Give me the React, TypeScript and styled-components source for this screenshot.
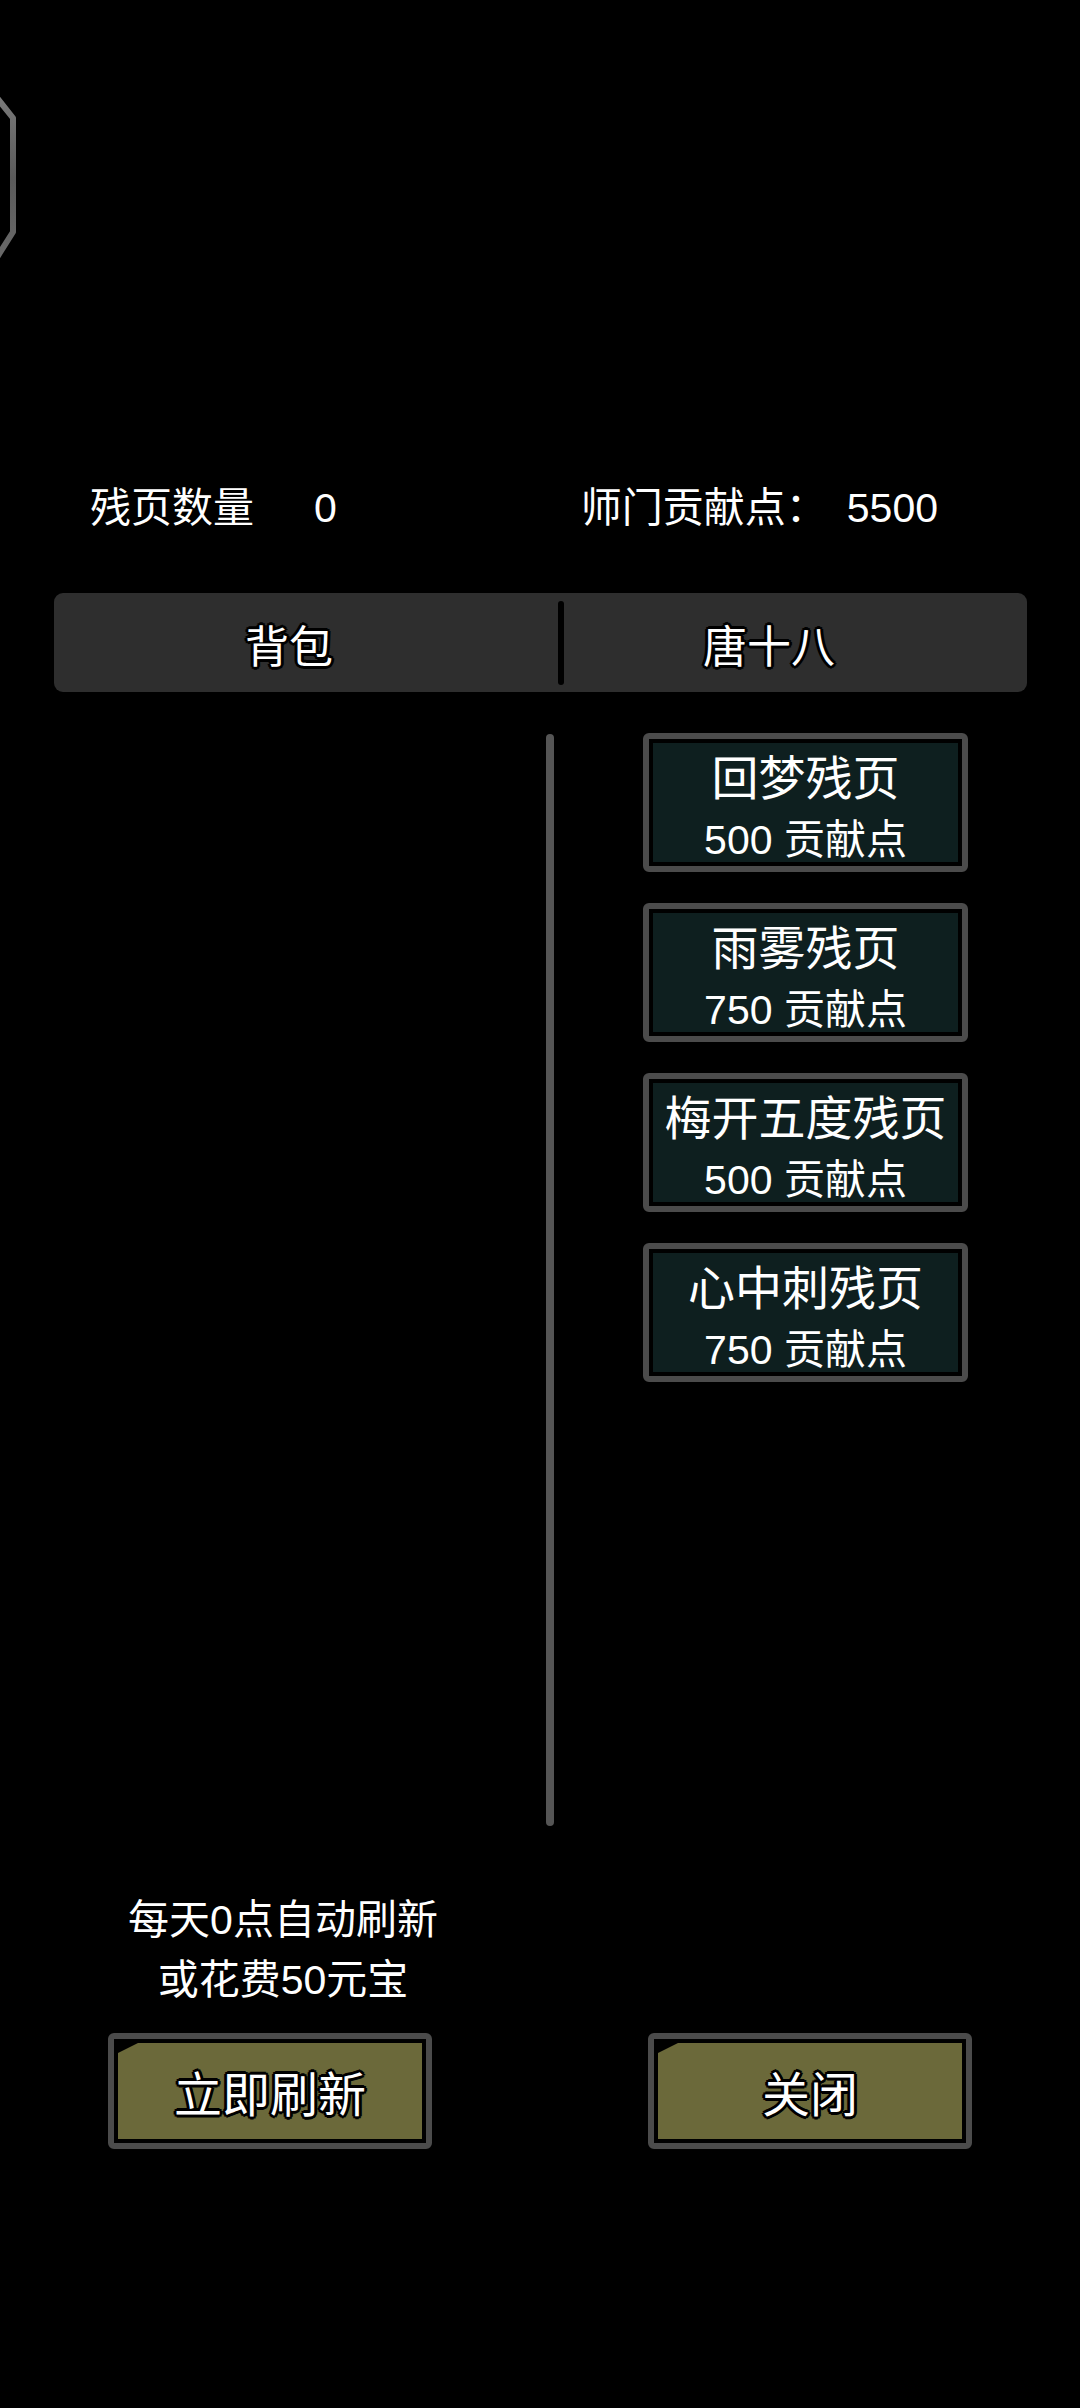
import styled, { createGlobalStyle } from "styled-components";

const GlobalStyle = createGlobalStyle`
  html, body {
    margin: 0;
    padding: 0;
    background: #000;
  }
  body {
    font-family: "Liberation Sans", "Noto Sans CJK SC", sans-serif;
    color: #fff;
  }
`;

const outline = `
  text-shadow:
    0 0 3px #000,
    2px 2px 0 #000, -2px -2px 0 #000, 2px -2px 0 #000, -2px 2px 0 #000,
    0 3px 0 #000, 3px 0 0 #000, 0 -3px 0 #000, -3px 0 0 #000;
`;

const Page = styled.div`
  width: 1080px;
  height: 2408px;
  background: #000;
  overflow: hidden;
  display: flex;
  flex-direction: column;
`;

const TopBar = styled.div`
  height: 470px;
  padding-top: 92px;
  box-sizing: border-box;
`;

const HeaderRow = styled.div`
  height: 76px;
  display: flex;
  align-items: center;
  font-size: 41px;
  line-height: 76px;
`;

const Stat = styled.div<{ $left: number; $gap: number }>`
  display: flex;
  margin-left: ${({ $left }) => $left}px;
  gap: ${({ $gap }) => $gap}px;
`;

const TabBar = styled.div`
  margin: 47px 53px 0 54px;
  height: 99px;
  background: #2e2e2e;
  border-radius: 9px;
  display: grid;
  grid-template-columns: 504px 6px 1fr;
  align-items: center;
`;

const Tab = styled.div<{ $shift: number }>`
  text-align: center;
  padding: 10px ${({ $shift }) => $shift}px 0 0;
  font-size: 44px;
  line-height: 89px;
  ${outline}
`;

const TabDivider = styled.div`
  width: 6px;
  height: 84px;
  background: #000;
  border-radius: 3px;
`;

const Body = styled.div`
  display: grid;
  grid-template-columns: 492px 8px 1fr;
  padding: 41px 0 0 54px;
`;

const VerticalRule = styled.div`
  width: 8px;
  height: 1092px;
  margin-top: 1px;
  background: #555;
  border-radius: 4px;
`;

const ShopList = styled.div`
  padding-left: 89px;
  display: flex;
  flex-direction: column;
  gap: 31px;
`;

const Card = styled.div`
  width: 325px;
  height: 139px;
  box-sizing: border-box;
  border: 6px solid #4b4b4b;
  border-radius: 6px;
  background: #000;
  padding: 4px;
  display: flex;
`;

const CardFill = styled.div`
  flex: 1;
  background: #0e1f1f;
  display: flex;
  flex-direction: column;
  align-items: center;
  padding-top: 6px;
`;

const CardTitle = styled.div`
  font-size: 47px;
  line-height: 60px;
  white-space: nowrap;
`;

const CardPrice = styled.div`
  font-size: 41px;
  line-height: 62px;
  white-space: nowrap;
`;

const Footer = styled.div`
  display: grid;
  grid-template-columns: 540px 540px;
  margin-top: 64px;
`;

const FooterColumn = styled.div`
  display: flex;
  flex-direction: column;
  justify-content: flex-end;
  padding-left: 108px;
`;

const RefreshNote = styled.div`
  width: 350px;
  text-align: center;
  font-size: 41px;
  line-height: 60px;
  margin-bottom: 23px;
`;

const GameButton = styled.div`
  width: 324px;
  height: 116px;
  box-sizing: border-box;
  border: 6px solid #4b4b4b;
  border-radius: 6px;
  background: #000;
  padding: 4px;
  display: flex;
`;

const ButtonFill = styled.div`
  flex: 1;
  background: #6b693a;
  clip-path: polygon(20px 0, 100% 0, 100% 100%, 0 100%, 0 10px);
  display: flex;
  align-items: center;
  justify-content: center;
  font-size: 48px;
  ${outline}
`;

const items = [
  { name: "回梦残页", price: 500 },
  { name: "雨雾残页", price: 750 },
  { name: "梅开五度残页", price: 500 },
  { name: "心中刺残页", price: 750 },
];

function BackEdge() {
  return (
    <svg width="24" height="180" viewBox="0 0 24 180" style={{ display: "block" }}>
      <defs>
        <linearGradient id="edge" x1="0" y1="0" x2="0" y2="1">
          <stop offset="0" stopColor="#7a7a7a" />
          <stop offset="0.5" stopColor="#5a5a5a" />
          <stop offset="1" stopColor="#6a6a6a" />
        </linearGradient>
      </defs>
      <path
        d="M-6 2 L13 26 L13 140 L-6 170"
        fill="none"
        stroke="url(#edge)"
        strokeWidth="6"
        strokeLinejoin="round"
      />
    </svg>
  );
}

export default function App() {
  return (
    <>
      <GlobalStyle />
      <Page>
        <TopBar>
          <BackEdge />
        </TopBar>

        <HeaderRow>
          <Stat $left={90} $gap={60}>
            <span>残页数量</span>
            <span>0</span>
          </Stat>
          <Stat $left={244} $gap={20}>
            <span>师门贡献点：</span>
            <span>5500</span>
          </Stat>
        </HeaderRow>

        <TabBar>
          <Tab $shift={34}>背包</Tab>
          <TabDivider />
          <Tab $shift={53}>唐十八</Tab>
        </TabBar>

        <Body>
          <div />
          <VerticalRule />
          <ShopList>
            {items.map((item) => (
              <Card key={item.name}>
                <CardFill>
                  <CardTitle>{item.name}</CardTitle>
                  <CardPrice>{item.price} 贡献点</CardPrice>
                </CardFill>
              </Card>
            ))}
          </ShopList>
        </Body>

        <Footer>
          <FooterColumn>
            <RefreshNote>
              每天0点自动刷新
              <br />
              或花费50元宝
            </RefreshNote>
            <GameButton>
              <ButtonFill>立即刷新</ButtonFill>
            </GameButton>
          </FooterColumn>
          <FooterColumn>
            <GameButton>
              <ButtonFill>关闭</ButtonFill>
            </GameButton>
          </FooterColumn>
        </Footer>
      </Page>
    </>
  );
}
